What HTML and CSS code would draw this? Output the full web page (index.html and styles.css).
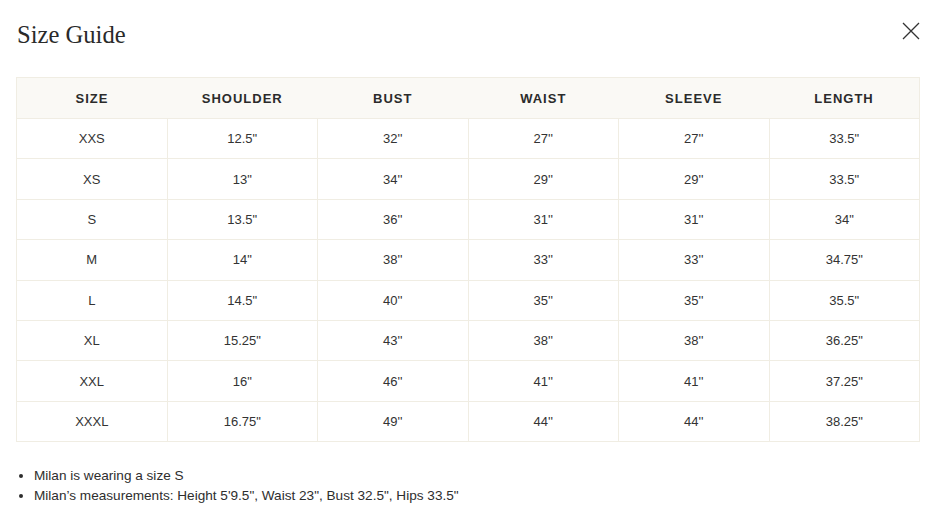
FILE: index.html
```html
<!DOCTYPE html>
<html lang="en">
<head>
<meta charset="utf-8">
<title>Size Guide</title>
<link rel="stylesheet" href="styles.css">
</head>
<body>
<div class="modal">
  <div class="head">
    <h1 class="title">Size Guide</h1>
    <button class="close" aria-label="Close">
      <svg width="18" height="18" viewBox="0 0 18 18"><path d="M1 1L17 17M17 1L1 17" stroke="#333" stroke-width="1.3" fill="none"/></svg>
    </button>
  </div>
  <table class="sizes">
    <thead>
      <tr><th>SIZE</th><th>SHOULDER</th><th>BUST</th><th>WAIST</th><th>SLEEVE</th><th>LENGTH</th></tr>
    </thead>
    <tbody>
      <tr><td>XXS</td><td>12.5"</td><td>32''</td><td>27''</td><td>27''</td><td>33.5"</td></tr>
      <tr><td>XS</td><td>13"</td><td>34''</td><td>29''</td><td>29''</td><td>33.5"</td></tr>
      <tr><td>S</td><td>13.5"</td><td>36''</td><td>31''</td><td>31''</td><td>34"</td></tr>
      <tr><td>M</td><td>14"</td><td>38''</td><td>33''</td><td>33''</td><td>34.75"</td></tr>
      <tr><td>L</td><td>14.5"</td><td>40''</td><td>35''</td><td>35''</td><td>35.5"</td></tr>
      <tr><td>XL</td><td>15.25"</td><td>43''</td><td>38''</td><td>38''</td><td>36.25"</td></tr>
      <tr><td>XXL</td><td>16"</td><td>46''</td><td>41''</td><td>41''</td><td>37.25"</td></tr>
      <tr><td>XXXL</td><td>16.75"</td><td>49''</td><td>44''</td><td>44''</td><td>38.25"</td></tr>
    </tbody>
  </table>
  <ul class="notes">
    <li>Milan is wearing a size S</li>
    <li>Milan’s measurements: Height 5'9.5", Waist 23", Bust 32.5", Hips 33.5"</li>
  </ul>
</div>
</body>
</html>
```
FILE: styles.css
```css
html, body {
  margin: 0;
  padding: 0;
  background: #fff;
}
.modal {
  padding: 0 6px 0 16px;
  color: #2e2e2e;
  font-family: "Liberation Sans", Arial, sans-serif;
}
.head {
  display: flex;
  justify-content: space-between;
  align-items: flex-start;
  height: 77px;
}
.title {
  margin: 20px 0 0 1px;
  font-family: "Liberation Serif", "Times New Roman", serif;
  font-weight: normal;
  font-size: 24.6px;
  line-height: 30px;
  color: #2a2a2a;
}
.close {
  margin-top: 22px;
  margin-right: 0;
  padding: 0;
  border: 0;
  background: none;
  width: 18px;
  height: 18px;
  display: flex;
}
.sizes {
  width: 904px;
  border-collapse: collapse;
  table-layout: fixed;
  border: 1px solid #f0ede3;
}
.sizes th {
  background: #faf9f5;
  height: 40px;
  padding: 0;
  font-size: 13px;
  font-weight: bold;
  letter-spacing: 1px;
  color: #2b2b2b;
  text-align: center;
}
.sizes td {
  height: 39.4px;
  padding: 0;
  border: 1px solid #f0ede3;
  font-size: 13px;
  color: #333;
  text-align: center;
}
.notes {
  margin: 24px 0 0;
  padding-left: 18px;
  font-size: 13.6px;
  line-height: 20px;
  color: #2e2e2e;
}
```
